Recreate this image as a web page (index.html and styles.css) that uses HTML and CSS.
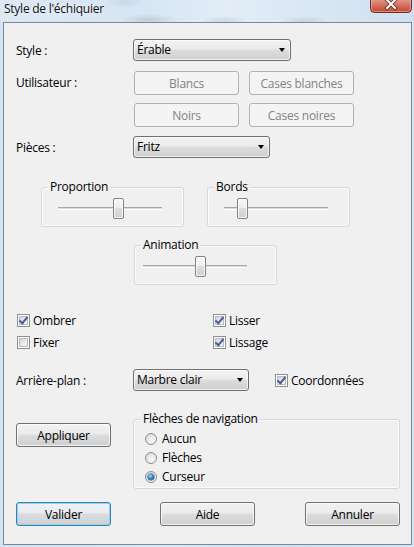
FILE: index.html
```html
<!DOCTYPE html>
<html lang="fr">
<head>
<meta charset="utf-8">
<title>Style de l'échiquier</title>
<link rel="stylesheet" href="styles.css">
</head>
<body>
<div class="window">
  <div class="titlebar">
    <span class="title">Style de l'échiquier</span>
    <span class="close">
      <svg width="42" height="13" viewBox="0 0 42 13">
        <defs>
          <linearGradient id="cg" x1="0" y1="0" x2="0" y2="1">
            <stop offset="0" stop-color="#e7a394"/>
            <stop offset="0.5" stop-color="#d4715f"/>
            <stop offset="1" stop-color="#c1442f"/>
          </linearGradient>
        </defs>
        <path d="M0.5 -2 V8.5 Q0.5 12.5 4.5 12.5 H37.5 Q41.5 12.5 41.5 8.5 V-2 Z" fill="url(#cg)" stroke="#6e2b22"/>
        <path d="M1.5 -2 V8 Q1.5 11.5 5 11.5 H37 Q40.5 11.5 40.5 8 V-2" fill="none" stroke="#efb7a9" stroke-opacity="0.6"/>
        <path d="M17 0 L25 8 M25 0 L17 8" stroke="#5a2a22" stroke-width="3.6" stroke-linecap="square"/>
        <path d="M17 0 L25 8 M25 0 L17 8" stroke="#ffffff" stroke-width="2" stroke-linecap="square"/>
      </svg>
    </span>
  </div>
  <div class="client">
    <div class="row r-style">
      <span class="label">Style :</span>
      <div class="select w-style">Érable<i class="arrow"></i></div>
    </div>
    <div class="row r-user">
      <span class="label label-btn">Utilisateur :</span>
      <div class="btngrid">
        <button class="btn disabled" disabled>Blancs</button>
        <button class="btn disabled" disabled>Cases blanches</button>
        <button class="btn disabled" disabled>Noirs</button>
        <button class="btn disabled" disabled>Cases noires</button>
      </div>
    </div>
    <div class="row r-pieces">
      <span class="label">Pièces :</span>
      <div class="select w-pieces">Fritz<i class="arrow"></i></div>
    </div>
    <div class="groups g-row1">
      <div class="group">
        <span class="legend">Proportion</span>
        <div class="slider"><div class="track"></div><div class="thumb" style="left:55px"></div></div>
      </div>
      <div class="group">
        <span class="legend">Bords</span>
        <div class="slider"><div class="track"></div><div class="thumb" style="left:13px"></div></div>
      </div>
    </div>
    <div class="groups g-row2">
      <div class="group">
        <span class="legend">Animation</span>
        <div class="slider slider-anim"><div class="track"></div><div class="thumb" style="left:52px"></div></div>
      </div>
    </div>
    <div class="checks">
      <label class="check"><span class="cb on"></span>Ombrer</label>
      <label class="check"><span class="cb on"></span>Lisser</label>
      <label class="check"><span class="cb"></span>Fixer</label>
      <label class="check"><span class="cb on"></span>Lissage</label>
    </div>
    <div class="row r-bg">
      <span class="label">Arrière-plan :</span>
      <div class="select w-bg">Marbre clair<i class="arrow"></i></div>
      <label class="check coord"><span class="cb on"></span>Coordonnées</label>
    </div>
    <div class="r-nav">
      <button class="btn b95 apply">Appliquer</button>
      <div class="group navgroup">
        <span class="legend">Flèches de navigation</span>
        <div class="radios">
          <label class="radio"><span class="rb"></span>Aucun</label>
          <label class="radio"><span class="rb"></span>Flèches</label>
          <label class="radio"><span class="rb on"></span>Curseur</label>
        </div>
      </div>
    </div>
    <div class="r-buttons">
      <button class="btn b95 default">Valider</button>
      <button class="btn b95">Aide</button>
      <button class="btn b95">Annuler</button>
    </div>
  </div>
</div>
</body>
</html>
```
FILE: styles.css
```css
* { box-sizing: border-box; }
html, body { margin: 0; padding: 0; }
body {
  width: 414px;
  height: 547px;
  overflow: hidden;
  font-family: "Open Sans", "Noto Sans", "DejaVu Sans", sans-serif;
  font-size: 12px;
  letter-spacing: -0.25px;
  color: #000;
  background: linear-gradient(90deg, #d3e3f2 0%, #dbe8f5 40%, #cfe0f1 70%, #d6e5f3 100%);
}
.window { width: 414px; height: 547px; }

.titlebar {
  height: 22px;
  display: flex;
  justify-content: space-between;
  align-items: flex-start;
  background:
    radial-gradient(ellipse 30px 6px at 150px 20px, rgba(120,130,140,0.25), transparent),
    radial-gradient(ellipse 25px 5px at 225px 21px, rgba(120,130,140,0.2), transparent),
    radial-gradient(ellipse 25px 5px at 305px 21px, rgba(120,130,140,0.2), transparent),
    radial-gradient(ellipse 20px 6px at 125px 2px, rgba(120,130,140,0.15), transparent),
    linear-gradient(90deg, #dce8f4 0%, #d7e6f4 35%, #e2edf7 55%, #cfe0f0 100%);
}
.title {
  padding-left: 4px;
  line-height: 18px;
  color: #111;
  text-shadow: 0 0 6px rgba(255,255,255,0.9);
}
.close { width: 42px; height: 13px; margin-right: 2px; display: block; }
.close svg { display: block; }

.client {
  margin-left: 3px;
  width: 409px;
  height: 523px;
  border: 1px solid #7b8795;
  background: #f0f0f0;
  padding: 0 0 0 12px;
  display: flex;
  flex-direction: column;
}

.row { display: flex; align-items: center; }
.label { width: 117px; flex: none; }
.label-btn { line-height: 24px; align-self: flex-start; }

.r-style { margin-top: 16px; height: 22px; }
.r-user { margin-top: 10px; align-items: flex-start; }
.r-pieces { margin-top: 9px; height: 22px; }
.r-bg { margin-top: 16px; height: 22px; }

.select {
  position: relative;
  height: 22px;
  line-height: 20px;
  padding-left: 3px;
  border: 1px solid #707070;
  border-radius: 3px;
  background: linear-gradient(#f2f2f2 0%, #ebebeb 45%, #dddddd 50%, #cfcfcf 100%);
  box-shadow: inset 0 0 0 1px rgba(255,255,255,0.7);
}
.w-style { width: 158px; }
.w-pieces { width: 137px; }
.w-bg { width: 116px; }
.arrow {
  position: absolute;
  right: 5px;
  top: 8px;
  width: 0;
  height: 0;
  border-left: 3.5px solid transparent;
  border-right: 3.5px solid transparent;
  border-top: 4px solid #000;
}

.btngrid {
  margin-left: 1px;
  display: grid;
  grid-template-columns: 105px 105px;
  grid-auto-rows: 24px;
  column-gap: 10px;
  row-gap: 8px;
}
.btn {
  font: inherit;
  letter-spacing: inherit;
  color: #000;
  height: 24px;
  padding: 0;
  border: 1px solid #707070;
  border-radius: 3px;
  background: linear-gradient(#f2f2f2 0%, #ebebeb 45%, #dddddd 50%, #cfcfcf 100%);
  box-shadow: inset 0 0 0 1px rgba(255,255,255,0.75);
  text-align: center;
}
.btn.disabled {
  color: #838383;
  border-color: #adb2b5;
  background: #f4f4f4;
  box-shadow: none;
}
.btn.default {
  border-color: #3c7fb1;
  box-shadow: inset 0 0 0 1px #8ed2f6;
  background: linear-gradient(#f0f2f4 0%, #e8ebee 45%, #dadde0 50%, #ced1d4 100%);
}
.b95 { width: 95px; }

.groups { display: flex; }
.g-row1 { margin-top: 29px; padding-left: 25px; gap: 23px; }
.g-row2 { margin-top: 18px; padding-left: 118px; }
.group {
  width: 143px;
  height: 40px;
  border: 1px solid #d5d9dd;
  border-radius: 3px;
  box-shadow: inset 0 0 0 1px #fbfbfb;
}
.legend {
  display: block;
  width: max-content;
  margin: -9px 0 0 6px;
  padding: 0 2px;
  line-height: 16px;
  background: #f0f0f0;
}
.slider {
  position: relative;
  margin: 3px 0 0 16px;
  width: 104px;
  height: 21px;
}
.slider-anim { margin-left: 8px; }
.track {
  position: absolute;
  left: 0;
  right: 0;
  top: 9px;
  height: 3px;
  border-top: 1px solid #a8a8a8;
  border-bottom: 1px solid #ffffff;
  background: #dcdcdc;
}
.thumb {
  position: absolute;
  top: 0;
  width: 11px;
  height: 21px;
  border: 1px solid #828282;
  border-radius: 2px;
  background: linear-gradient(#f7f7f7 0%, #eeeeee 45%, #dcdcdc 50%, #d0d0d0 100%);
  box-shadow: inset 0 0 0 1px rgba(255,255,255,0.8);
}

.checks {
  margin-top: 24px;
  margin-left: 1px;
  display: grid;
  grid-template-columns: 196px 150px;
  grid-auto-rows: 22px;
}
.check { display: flex; align-items: center; }
.cb {
  flex: none;
  position: relative;
  width: 13px;
  height: 13px;
  margin-right: 3px;
  border: 1px solid #8e8f8f;
  background: #fff;
}
.cb::before {
  content: "";
  position: absolute;
  inset: 1px;
  border: 1px solid #b8bcc2;
  background: linear-gradient(135deg, #d3d6da 0%, #ebecee 60%, #f6f6f6 100%);
}
.cb.on::after {
  content: "";
  position: absolute;
  left: 3px;
  top: 0px;
  width: 3px;
  height: 7px;
  border-right: 2px solid #4a5e94;
  border-bottom: 2px solid #4a5e94;
  transform: rotate(40deg);
  transform-origin: 50% 50%;
}
.coord { margin-left: 26px; }

.r-nav {
  margin-top: 28px;
  display: flex;
  align-items: flex-start;
  gap: 22px;
}
.apply { margin-top: 4px; }
.navgroup { width: 267px; height: 70px; }
.navgroup .legend { margin-left: 7px; }
.radios { padding: 2px 0 0 11px; }
.radio { display: flex; align-items: center; height: 19px; }
.rb {
  flex: none;
  position: relative;
  width: 12px;
  height: 12px;
  margin-right: 5px;
  border-radius: 50%;
  border: 1px solid #8e8f8f;
  background: radial-gradient(circle at 60% 65%, #fbfbfb 0%, #e4e5e7 55%, #c9ccd0 100%);
}
.rb.on::after {
  content: "";
  position: absolute;
  left: 2px;
  top: 2px;
  width: 6px;
  height: 6px;
  border-radius: 50%;
  background: radial-gradient(circle at 40% 35%, #a8e2ff 0%, #2b86c7 45%, #0d4d86 100%);
  box-shadow: 0 0 0 0.5px #1d3f66;
}

.r-buttons {
  margin-top: 13px;
  display: flex;
}
.r-buttons .btn:nth-child(2) { margin-left: 49px; }
.r-buttons .btn:nth-child(3) { margin-left: 50px; }
```
